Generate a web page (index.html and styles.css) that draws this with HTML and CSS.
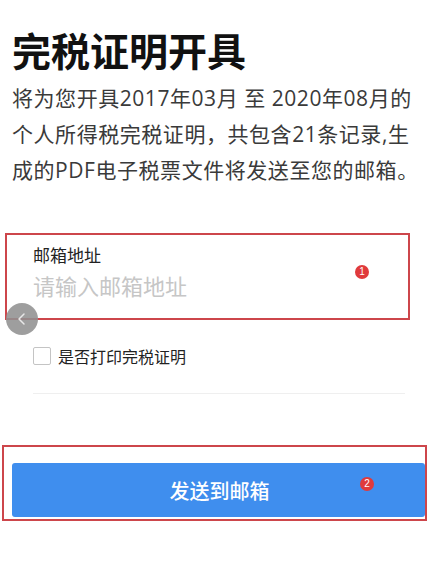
FILE: index.html
```html
<!DOCTYPE html>
<html lang="zh-CN">
<head>
<meta charset="utf-8">
<title>完税证明开具</title>
<link rel="stylesheet" href="styles.css">
</head>
<body>
<div class="page">
  <h1 class="title">完税证明开具</h1>
  <p class="desc">将为您开具2017年03月 至 2020年08月的<br>个人所得税完税证明，共包含21条记录,生<br>成的PDF电子税票文件将发送至您的邮箱。</p>

  <div class="mark mark-field">
    <div class="field-label">邮箱地址</div>
    <div class="field-input">请输入邮箱地址</div>
    <span class="badge badge-1">1</span>
  </div>

  <div class="back-btn">
    <svg width="12" height="14" viewBox="0 0 12 14"><path d="M8 2 L3 7 L8 12" fill="none" stroke="#e8e8e8" stroke-width="1.5" stroke-linecap="round" stroke-linejoin="round"/></svg>
  </div>

  <label class="check-row">
    <span class="checkbox"></span>
    <span class="check-text">是否打印完税证明</span>
  </label>

  <div class="divider"></div>

  <div class="mark mark-btn">
    <div class="send-btn">发送到邮箱</div>
    <span class="badge badge-2">2</span>
  </div>
</div>
</body>
</html>
```

FILE: styles.css
```css
html, body {
  margin: 0;
  padding: 0;
  background: #ffffff;
}

body {
  font-family: "Noto Sans CJK SC", "Noto Sans", sans-serif;
  color: #222;
}

.page {
  position: relative;
  width: 439px;
  height: 570px;
  overflow: hidden;
  display: flex;
  flex-direction: column;
  align-items: flex-start;
}

.title {
  margin: 26px 0 0 12px;
  font-size: 39px;
  line-height: 46px;
  font-weight: 700;
  color: #111;
  white-space: nowrap;
}

.desc {
  margin: 8px 0 0 12px;
  font-family: "Open Sans", "Noto Sans CJK SC", sans-serif;
  font-size: 21px;
  line-height: 36px;
  letter-spacing: 0.55px;
  color: #3a3a3a;
  white-space: nowrap;
}

.mark {
  position: relative;
  border: 2px solid #cd464b;
  box-sizing: border-box;
}

.mark-field {
  margin: 45px 0 0 5px;
  width: 405px;
  height: 87px;
  padding: 8px 0 0 26px;
}

.field-label {
  font-size: 17px;
  line-height: 24px;
  color: #222;
}

.field-input {
  margin-top: 3px;
  font-size: 22px;
  line-height: 30px;
  color: #c6c6c6;
}

.badge {
  position: absolute;
  width: 14px;
  height: 14px;
  border-radius: 50%;
  background: #e03a3c;
  color: #fff;
  font-size: 10px;
  line-height: 14px;
  text-align: center;
  font-family: "Liberation Sans", sans-serif;
}

.badge-1 {
  left: 348px;
  top: 30px;
}

.back-btn {
  position: absolute;
  left: 6px;
  top: 303px;
  width: 32px;
  height: 32px;
  border-radius: 50%;
  background: rgba(145, 145, 145, 0.88);
  display: flex;
  align-items: center;
  justify-content: center;
}

.check-row {
  margin: 26px 0 0 33px;
  display: flex;
  align-items: center;
  gap: 7px;
  height: 20px;
}

.checkbox {
  width: 16px;
  height: 16px;
  border: 1px solid #c4c4c4;
  border-radius: 2px;
  background: #fff;
}

.check-text {
  font-size: 16px;
  line-height: 20px;
  color: #222;
}

.divider {
  margin: 27px 0 0 33px;
  width: 372px;
  height: 1px;
  background: #efefef;
}

.mark-btn {
  margin: 51px 0 0 2px;
  width: 425px;
  height: 76px;
  padding: 16px 0 2px 8px;
}

.send-btn {
  height: 54px;
  border-radius: 3px;
  background: #3f8eee;
  color: #fff;
  font-size: 20px;
  font-weight: 500;
  display: flex;
  align-items: center;
  justify-content: center;
  padding-left: 2px;
}

.badge-2 {
  left: 356px;
  top: 30px;
}
```
